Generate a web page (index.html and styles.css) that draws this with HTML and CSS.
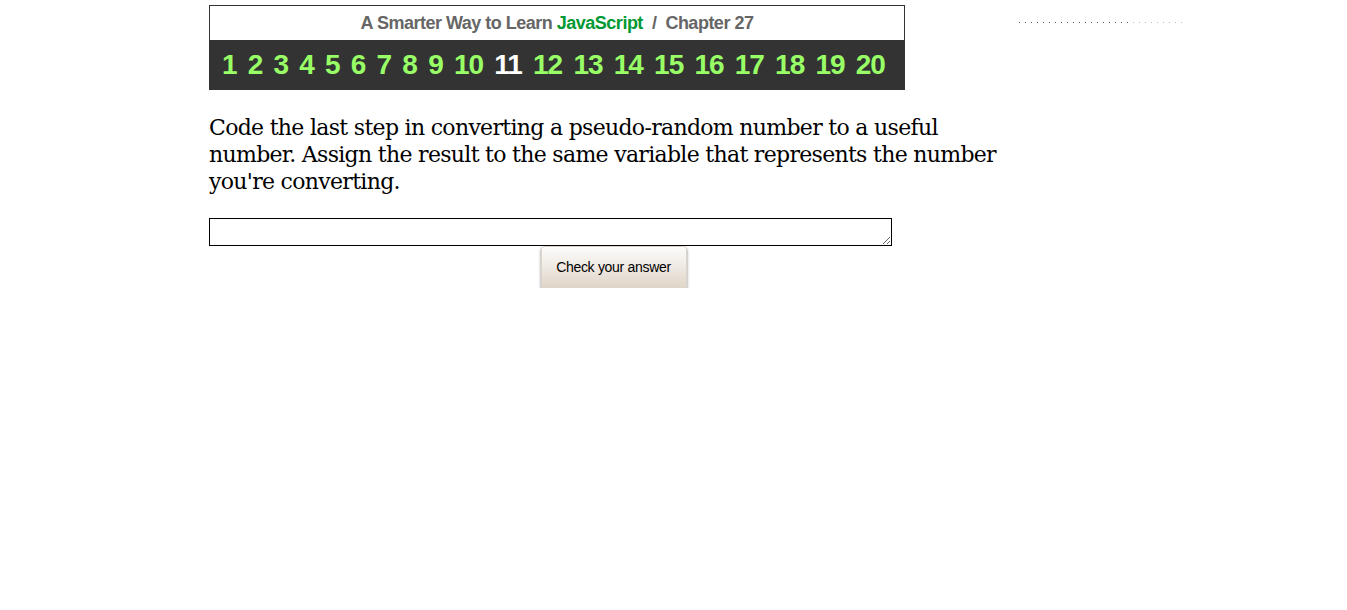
FILE: index.html
```html
<!DOCTYPE html>
<html>
<head>
<meta charset="utf-8">
<link rel="stylesheet" href="styles.css">
</head>
<body>
<div class="page">
  <div class="main">
    <div class="banner">
      <div class="title">A Smarter Way to Learn <span class="js">JavaScript</span>&nbsp; / &nbsp;Chapter 27</div>
      <div class="nums">
        <span>1</span><span>2</span><span>3</span><span>4</span><span>5</span><span>6</span><span>7</span><span>8</span><span>9</span><span>10</span><span class="cur">11</span><span>12</span><span>13</span><span>14</span><span>15</span><span>16</span><span>17</span><span>18</span><span>19</span><span>20</span>
      </div>
    </div>
    <p class="question">Code the last step in converting a pseudo-random number to a useful number. Assign the result to the same variable that represents the number you're converting.</p>
    <textarea class="answer"></textarea>
    <div class="btnrow"><button class="check">Check your answer</button></div>
  </div>
  <div class="side"><div class="dots dark"></div><div class="dots light"></div></div>
</div>
</body>
</html>
```
FILE: styles.css
```css
body { margin: 0; background: #fff; }
.page { display: flex; padding: 5px 0 0 209px; }
.main { width: 790px; }
.banner { width: 694px; border: 1px solid #333; }
.title { height: 34px; line-height: 34px; text-align: center; font-family: "Liberation Sans", Arial, sans-serif; font-weight: bold; font-size: 18px; color: #666; letter-spacing: -0.5px; }
.js { color: #009933; }
.nums { background: #333; height: 49px; display: flex; align-items: center; padding-left: 12px; font-family: "Liberation Sans", Arial, sans-serif; font-weight: bold; font-size: 28px; color: #99ff66; letter-spacing: -1px; }
.nums span { margin-right: 11.2px; }
.nums .cur { color: #fff; }
.question { margin: 24px 0 0; font-family: "DejaVu Serif", Georgia, serif; font-size: 22px; line-height: 27px; color: #000; letter-spacing: -0.69px; }
.answer { display: block; margin-top: 23px; width: 683px; height: 28px; box-sizing: border-box; border: 1px solid #000; padding: 2px; resize: both; }
.btnrow { width: 809px; display: flex; justify-content: center; }
.check { appearance: none; -webkit-appearance: none; width: 146px; height: 42px; border: 1px solid #ddd5ca; border-radius: 3px; background: linear-gradient(#fdfcfb, #e0d6c9); box-shadow: 0 2px 3px rgba(0,0,0,0.5); font-family: "Liberation Sans", Arial, sans-serif; font-size: 14px; color: #000; letter-spacing: -0.3px; padding: 0; }
.side { margin-left: 20px; padding-top: 17px; display: flex; }
.dots { height: 1px; }
.dark { width: 114px; background: repeating-linear-gradient(90deg, #555 0 1px, transparent 1px 6px); }
.light { width: 52px; background: repeating-linear-gradient(90deg, #bbb 0 1px, transparent 1px 6px); }
```
